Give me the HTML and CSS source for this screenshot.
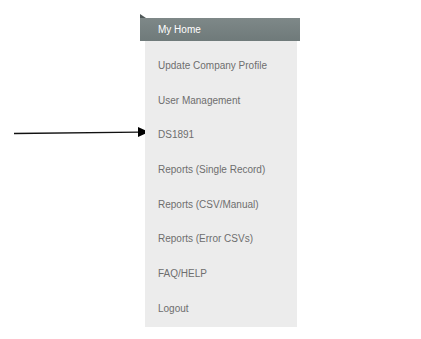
FILE: index.html
```html
<!DOCTYPE html>
<html lang="en">
<head>
    <meta charset="UTF-8">
    <title>Menu</title>
    <link rel="stylesheet" href="styles.css">
</head>
<body>
    <div class="wrap">
        <div class="pointer">
            <svg width="150" height="12" viewBox="0 0 150 12">
                <line x1="14" y1="7.5" x2="140" y2="6.2" stroke="#111" stroke-width="1.3"/>
                <polygon points="138,1 149,6 138,11" fill="#000"/>
            </svg>
        </div>
        <div class="menu">
            <div class="tab"></div>
            <div class="head">My Home</div>
            <ul class="list">
                <li>Update Company Profile</li>
                <li>User Management</li>
                <li>DS1891</li>
                <li>Reports (Single Record)</li>
                <li>Reports (CSV/Manual)</li>
                <li>Reports (Error CSVs)</li>
                <li>FAQ/HELP</li>
                <li>Logout</li>
            </ul>
        </div>
    </div>
</body>
</html>
```

FILE: styles.css
```css
* {
    margin: 0;
    padding: 0;
    box-sizing: border-box;
}
li {
    list-style: none;
}
body {
    background: #fff;
    font-family: "Liberation Sans", Arial, sans-serif;
}
.wrap {
    position: relative;
    width: 421px;
    height: 339px;
}
.pointer {
    position: absolute;
    left: 0;
    top: 126px;
    line-height: 0;
}
.menu {
    position: absolute;
    left: 140px;
    top: 14px;
    width: 160px;
}
.tab {
    width: 0;
    height: 0;
    border-left: 6px solid #4f5858;
    border-top: 4px solid transparent;
}
.head {
    height: 23px;
    line-height: 23px;
    padding-left: 18px;
    font-size: 10px;
    color: #fff;
    background: linear-gradient(#7e8888, #6f7a7a);
}
.list {
    margin-left: 5px;
    width: 152px;
    background: #ececec;
    padding: 8px 0 0;
}
.list li {
    height: 34.7px;
    line-height: 34.7px;
    padding-left: 13px;
    font-size: 10px;
    color: #6e6e6e;
}
```
